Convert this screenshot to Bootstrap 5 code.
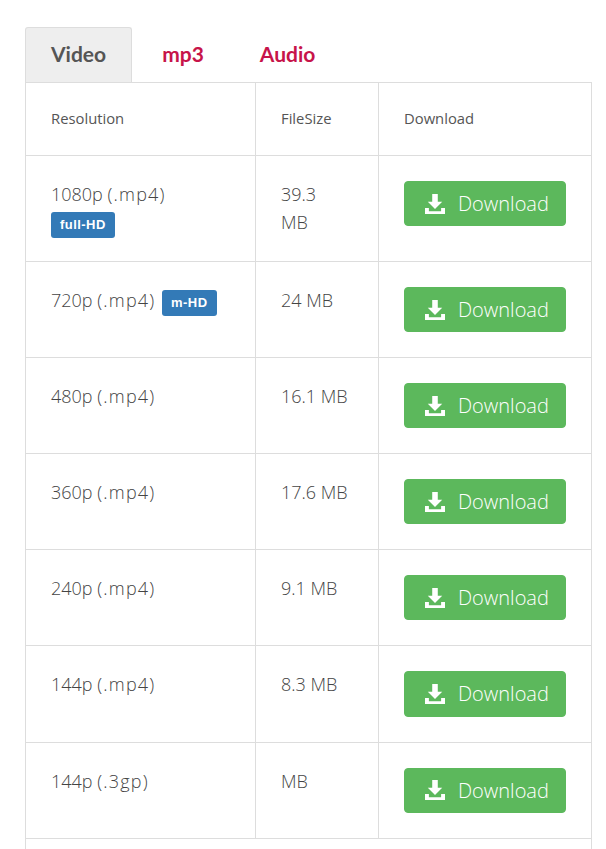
<!DOCTYPE html>
<html lang="en">
<head>
  <meta charset="UTF-8">
  <title>Download</title>
  <link href="https://cdn.jsdelivr.net/npm/bootstrap@5.3.0/dist/css/bootstrap.min.css" rel="stylesheet">
  <style>
    html, body { overflow: hidden; height: 849px; }
    body { font-family: "Open Sans", "Liberation Sans", sans-serif; font-weight: 300; color: #444; background: #fff; }
    .page-wrap { padding: 27px 14px 0 25px; }
    .format-tabs { border-bottom: 0; gap: 4px; }
    .format-tabs .nav-link { font-family: Lato, "Liberation Sans", sans-serif; font-weight: 700; font-size: 21px; line-height: 27px; color: #c7144a; padding: 12px 25px 15px; border: 1px solid transparent; border-bottom: 0; border-radius: 3px 3px 0 0; margin: 0; }
    .format-tabs .nav-link.active { color: #555; background: #eee; border-color: #ddd; }
    .dl-table { table-layout: fixed; width: 567px; margin: 0; border-color: #ddd; }
    .dl-table > :not(caption) > * > * { padding: 25px; border-color: #ddd; color: #444; box-shadow: none; }
    .dl-table > thead > tr > th { font-weight: 400; font-size: 14.8px; line-height: 22px; height: 73px; vertical-align: middle; color: #555; padding-top: 24px; padding-bottom: 26px; }
    .dl-table td { font-size: 18px; line-height: 28px; vertical-align: top; }
    .dl-table > tbody > tr > .text-cell { padding-top: 24px; }
    .dl-table td:first-child, .dl-table th:first-child { width: 230px; }
    .dl-table td:nth-child(2), .dl-table th:nth-child(2) { width: 123px; }
    .file-ext { letter-spacing: 1.2px; }
    .hd-tag { font-family: "Liberation Sans", sans-serif; font-weight: 700; font-size: 13px; letter-spacing: .45px; line-height: 14px; background: #337ab7; color: #fff; border-radius: 3px; padding: 6px 9px; }
    .hd-inline { margin-left: 2px; vertical-align: 0; }
    .hd-below { display: block; width: fit-content; margin: 4px 0 -4px; }
    .btn-dl { width: 162px; height: 45.11px; background: #5cb85c; border: 1px solid #5cb85c; border-radius: 4px; color: #fff; font-size: 20px; font-weight: 300; line-height: 27px; padding: 0 0 0 20px; }
    .btn-dl svg { width: 20px; height: 20px; margin-right: 13px; }
    .end-row td { height: 60px; }
  </style>
</head>
<body>
  <div class="page-wrap">
    <ul class="nav nav-tabs format-tabs">
      <li class="nav-item"><a class="nav-link active" href="#">Video</a></li>
      <li class="nav-item"><a class="nav-link" href="#">mp3</a></li>
      <li class="nav-item"><a class="nav-link" href="#">Audio</a></li>
    </ul>
    <table class="table table-bordered dl-table">
      <thead>
        <tr><th>Resolution</th><th>FileSize</th><th>Download</th></tr>
      </thead>
      <tbody id="rows"></tbody>
      <tfoot><tr class="end-row"><td colspan="3"></td></tr></tfoot>
    </table>
  </div>

  <script>
    const rows = [
      ['1080p', '(.mp4)', '39.3<br>MB', '<span class="badge hd-tag hd-below">full-HD</span>'],
      ['720p', '(.mp4)', '24 MB', ' <span class="badge hd-tag hd-inline">m-HD</span>'],
      ['480p', '(.mp4)', '16.1 MB', ''],
      ['360p', '(.mp4)', '17.6 MB', ''],
      ['240p', '(.mp4)', '9.1 MB', ''],
      ['144p', '(.mp4)', '8.3 MB', ''],
      ['144p', '(.3gp)', 'MB', '']
    ];
    const icon = '<svg viewBox="1 1 18 18" fill="#fff"><path d="M7.500 1h5v7h4L10 14.600 3.500 8h4z"/><path d="M1 13.500h3.500V16.500h11v-3H19V19H1z"/></svg>';
    document.getElementById('rows').innerHTML = rows.map(r => `
      <tr>
        <td class="text-cell">${r[0]} <span class="file-ext">${r[1]}</span>${r[3]}</td>
        <td class="text-cell">${r[2]}</td>
        <td><button class="btn btn-dl d-flex align-items-center">${icon}Download</button></td>
      </tr>`).join('');
  </script>
  <script src="https://cdn.jsdelivr.net/npm/bootstrap@5.3.0/dist/js/bootstrap.bundle.min.js"></script>
</body>
</html>
